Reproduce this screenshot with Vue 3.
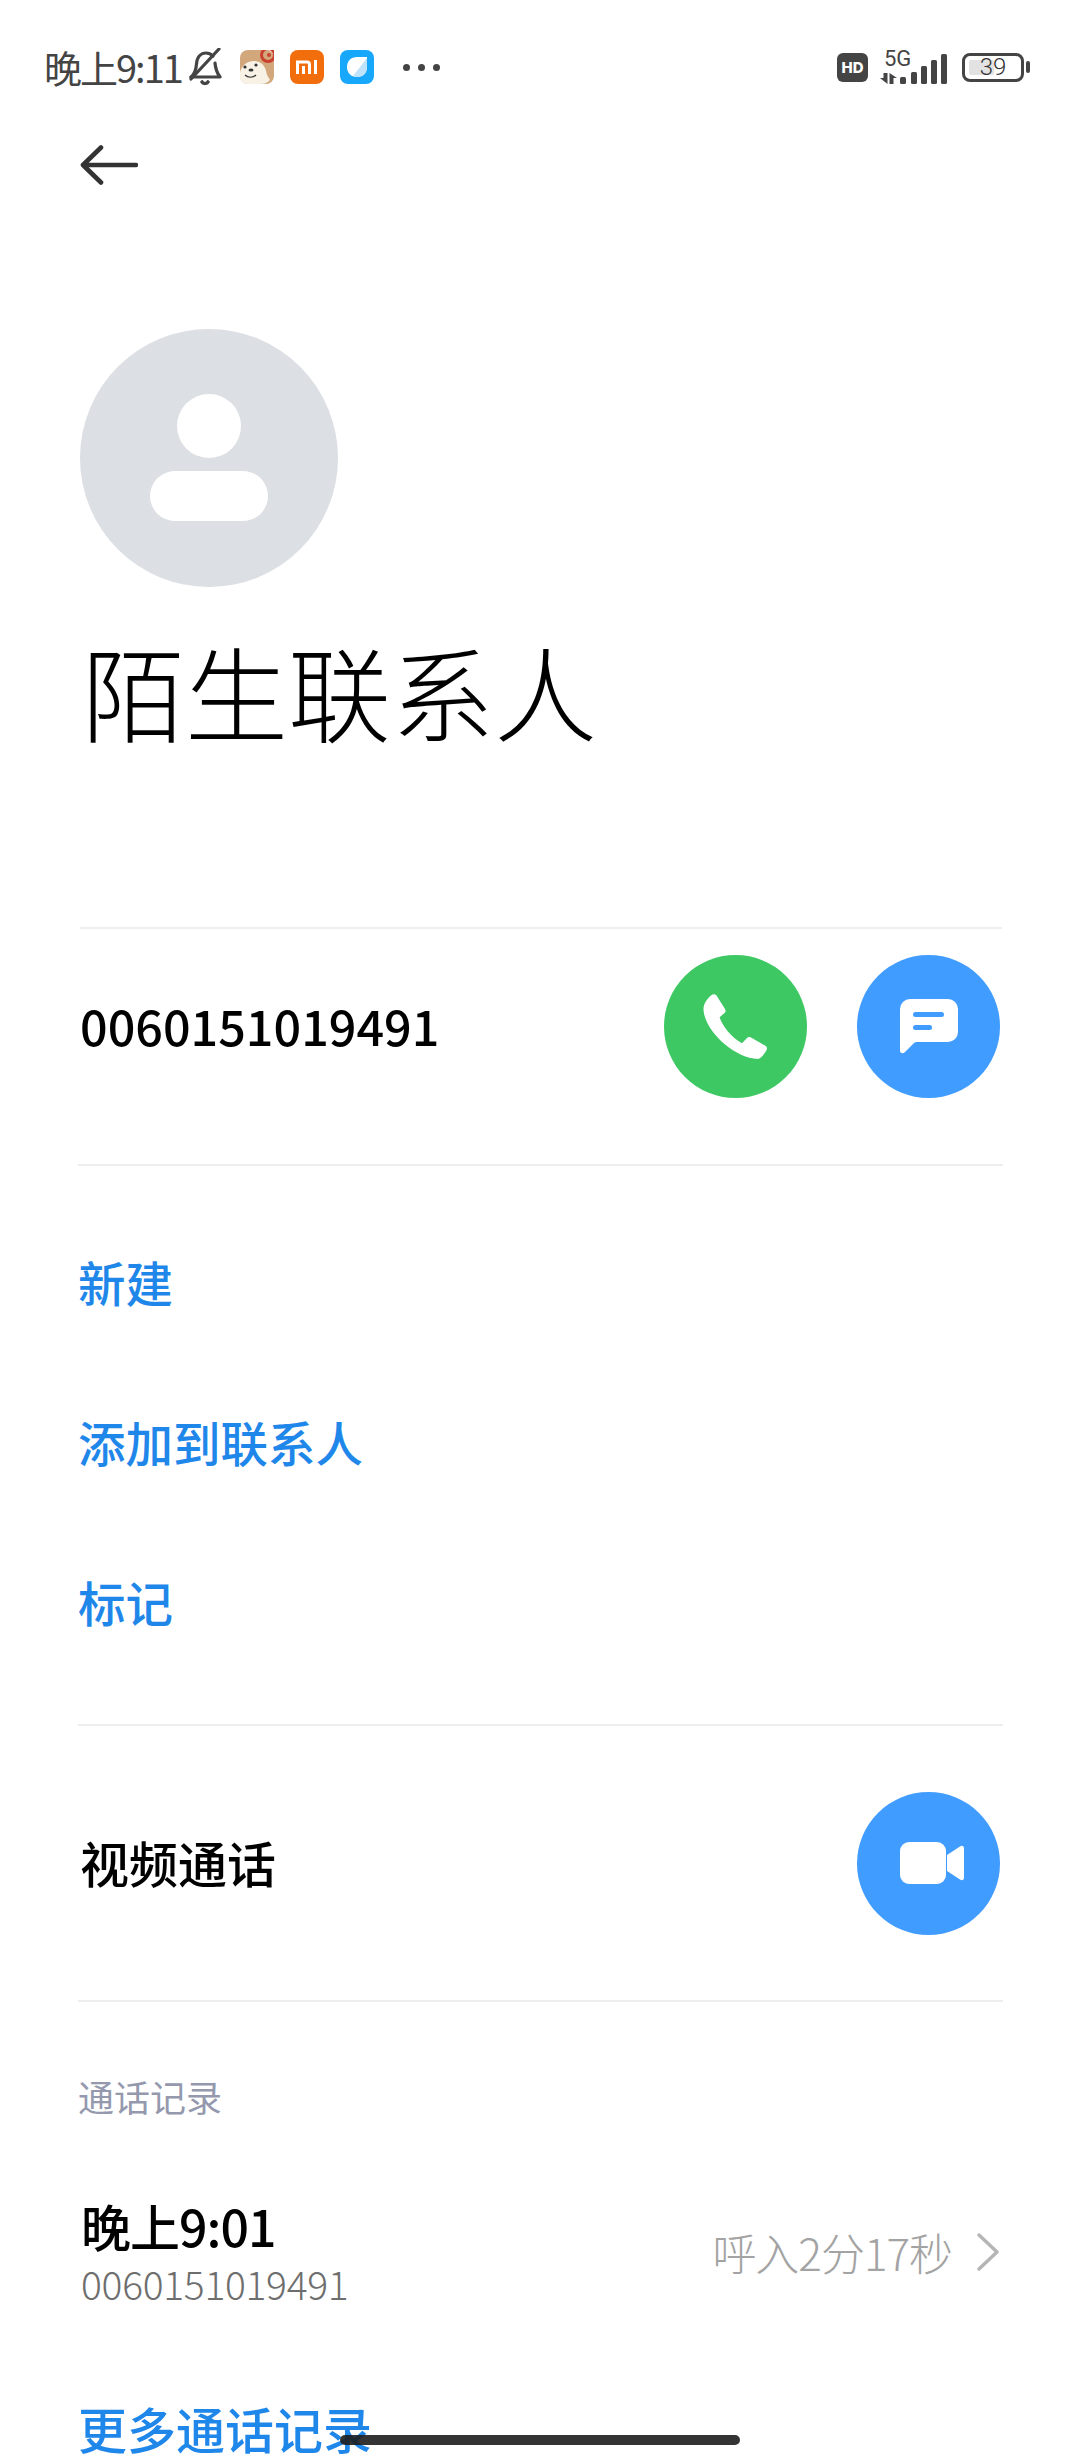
<script setup>
const links = ['新建', '添加到联系人', '标记']
const bars = [
  { x: 20, y: 26, h: 7 }, { x: 31, y: 21, h: 12 }, { x: 41, y: 15, h: 18 }, { x: 51, y: 9, h: 24 }, { x: 61, y: 3, h: 30 }
]
</script>

<template>
  <div class="page">
    <header class="status">
      <div class="status-left">
        <span class="clock">晚上9:11</span>
        <svg class="bell" width="34" height="38" viewBox="0 0 34 38" fill="none" stroke="#444" stroke-width="3.2" stroke-linecap="round" stroke-linejoin="round">
          <path d="M3 29c4-3 5-7 5.500-13C9 9 13 5 18 5c3 0 5 1 7 3" />
          <path d="M27 15c.5 6 2 10 5 14H3" />
          <path d="M31 1 3 31" />
          <path d="M14 34c1 2 5 2 6 0" stroke-width="3.600" />
        </svg>
        <svg class="app" width="34" height="34" viewBox="0 0 34 34">
          <rect width="34" height="34" rx="8" fill="#d3a77c" />
          <path d="M0 22c3-10 12-13 19-10 5 2 7 7 8 13l3 5c-3 3-6 4-9 4H7c-4 0-7-3-7-7z" fill="#f7f1e6" />
          <circle cx="28" cy="5" r="6.500" fill="none" stroke="#c9402f" stroke-width="3" />
          <circle cx="29" cy="5" r="2" fill="#c9402f" />
          <circle cx="5" cy="17" r="1.600" fill="#333" />
          <circle cx="16" cy="15" r="1.600" fill="#333" />
          <ellipse cx="11" cy="20" rx="2.500" ry="1.500" fill="#333" />
          <path d="M5 25c3 3 8 3 11 0" fill="none" stroke="#333" stroke-width="1.200" />
        </svg>
        <span class="mi-icon"><svg width="22" height="14" viewBox="0 0 22 14" fill="none" stroke="#fff" stroke-width="3"><path d="M1.500 14V2H11a2.500 2.500 0 0 1 2.500 2.500V14M7.500 6v8M19.500 0v14" /></svg></span>
        <svg class="app" width="34" height="34" viewBox="0 0 34 34">
          <rect width="34" height="34" rx="8" fill="#18a8fb" />
          <path d="M7 17c0-6 4-10 10-10h10v10c0 6-4 10-10 10-6 0-10-4-10-10z" fill="#fff" />
          <path d="M27 8v9c0 6-4 10-10 10-2 0-3-.4-4-1z" fill="#bfe3fb" />
        </svg>
        <span class="dots"><i></i><i></i><i></i></span>
      </div>
      <div class="status-right">
        <span class="hd">HD</span>
        <div class="signal">
          <span class="five-g">5G</span>
          <svg width="67" height="33" viewBox="0 0 67 33">
            <path d="M0 27h3.500v-5h4v11zM9.500 22l7.500 5h-3.500v6h-4z" fill="#444" />
            <rect v-for="bar in bars" :key="bar.x" :x="bar.x" :y="bar.y" width="6" :height="bar.h" rx="1.500" fill="#444" />
          </svg>
        </div>
        <div class="battery">
          <span class="battery-frame"><span class="battery-fill"></span><span class="battery-num">39</span></span>
          <span class="battery-cap"></span>
        </div>
      </div>
    </header>

    <div class="back-row">
      <svg width="58" height="40" viewBox="0 0 58 40" fill="none" stroke="#333" stroke-width="4.600" stroke-linecap="round" stroke-linejoin="round">
        <path d="M56 20H3M21 2.500 3 20l18 17.500" />
      </svg>
    </div>

    <section class="hero">
      <div class="avatar">
        <span class="avatar-head"></span>
        <span class="avatar-body"></span>
      </div>
      <h1 class="name">陌生联系人</h1>
    </section>

    <div class="line first-line"></div>
    <section class="number-row">
      <span class="number">0060151019491</span>
      <div class="actions">
        <span class="circle green">
          <svg width="65" height="66" viewBox="0 0 65 66">
            <path d="M8 1.500C10-.3 12 0 13.500 1.500L22 15c1 2 .8 3-.5 4l-4.900 4.300C20 33 28 43 39 49.300l5-5.300c1-1.200 2.500-1.200 4-.5l14 8c2.500 1.500 2.500 3.500 1 5.500-2 3-4 7-8 8C30 64 0 35 .5 14 1 9 5 4 8 1.500z" fill="#fff" />
          </svg>
        </span>
        <span class="circle blue">
          <svg width="58" height="55" viewBox="0 0 58 55">
            <path d="M10 0h38a10 10 0 0 1 10 10v23a10 10 0 0 1-10 10H17c-1.500 0-2.500.5-3.500 1.500L5 53c-2 2-5 1.500-5-1.500V10A10 10 0 0 1 10 0z" fill="#fff" />
            <rect x="13" y="13" width="31" height="5" rx="2.500" fill="#409cff" />
            <rect x="13" y="26" width="19" height="5" rx="2.500" fill="#409cff" />
          </svg>
        </span>
      </div>
    </section>
    <div class="line wide"></div>

    <nav class="links">
      <a v-for="link in links" :key="link" class="link">{{ link }}</a>
    </nav>
    <div class="line wide"></div>

    <section class="video-row">
      <span class="video-label">视频通话</span>
      <span class="circle blue">
        <svg class="video-icon" width="64" height="42" viewBox="0 0 64 42">
          <rect width="46" height="42" rx="9" fill="#fff" />
          <path d="M47 13l13-8.500c2-1.500 4-.5 4 2v29c0 2.500-2 3.500-4 2L47 29z" fill="#fff" />
        </svg>
      </span>
    </section>
    <div class="line wide"></div>

    <section class="history">
      <h2 class="history-title">通话记录</h2>
      <div class="history-row">
        <div class="history-main">
          <div class="history-time">晚上9:01</div>
          <div class="history-number">0060151019491</div>
        </div>
        <div class="history-meta">
          <span>呼入2分17秒</span>
          <svg width="24" height="38" viewBox="0 0 24 38" fill="none" stroke="#b5b5b5" stroke-width="3.400" stroke-linecap="round" stroke-linejoin="round">
            <path d="M3 2l18 17L3 36" />
          </svg>
        </div>
      </div>
      <a class="link more">更多通话记录</a>
    </section>

    <div class="home-bar"></div>
  </div>
</template>

<style>
html, body { margin: 0; background: #fff; }
</style>

<style scoped>
.page {
  position: relative;
  width: 1080px;
  height: 2460px;
  overflow: hidden;
  background: #fff;
  font-family: "Noto Sans CJK SC", "Noto Sans", sans-serif;
  color: #000;
}
.status {
  height: 90px;
  padding: 48px 50px 0 44px;
  box-sizing: border-box;
  display: flex;
  justify-content: space-between;
  align-items: flex-start;
}
.status-left { display: flex; align-items: center; height: 38px; }
.clock { font-size: 38px; line-height: 38px; color: #444; letter-spacing: -2px; white-space: nowrap; }
.bell { margin-left: 6px; }
.bell + .app { margin-left: 18px; }
.app { flex: none; }
.mi-icon {
  margin: 0 16px;
  width: 34px;
  height: 34px;
  border-radius: 8px;
  background: #f26d0c;
  display: flex;
  align-items: center;
  justify-content: center;
}
.dots { margin-left: 29px; display: flex; gap: 8px; }
.dots i { width: 7px; height: 7px; border-radius: 50%; background: #444; }
.status-right { display: flex; align-items: center; height: 38px; }
.hd {
  width: 31px;
  height: 29px;
  border-radius: 6px;
  background: #444;
  color: #fff;
  font-family: "Inter", sans-serif;
  font-size: 15px;
  font-weight: 800;
  line-height: 29px;
  text-align: center;
}
.signal { position: relative; width: 67px; height: 33px; margin-left: 12px; }
.signal svg { display: block; }
.five-g {
  position: absolute;
  left: 4px;
  top: -3px;
  font-family: "Roboto", sans-serif;
  font-size: 22px;
  line-height: 22px;
  color: #444;
}
.battery { display: flex; align-items: center; margin-left: 15px; }
.battery-frame {
  position: relative;
  width: 62px;
  height: 29px;
  box-sizing: border-box;
  border: 3px solid #444;
  border-radius: 8px;
  display: block;
}
.battery-fill {
  position: absolute;
  left: 4px;
  top: 4px;
  width: 25px;
  height: 15px;
  background: #e2e2e2;
  border-radius: 2px;
}
.battery-num {
  position: absolute;
  inset: 0;
  font-family: "Roboto", sans-serif;
  font-size: 24px;
  font-weight: 300;
  line-height: 23px;
  text-align: center;
  color: #333;
}
.battery-cap { width: 4px; height: 12px; margin-left: 2px; background: #444; border-radius: 2px; }
.back-row { height: 150px; padding: 0 0 0 80px; display: flex; align-items: center; }
.hero { padding: 89px 0 0 80px; }
.avatar {
  position: relative;
  width: 258px;
  height: 258px;
  border-radius: 50%;
  background: #dcdfe3;
}
.avatar-head {
  position: absolute;
  left: 97px;
  top: 65px;
  width: 64px;
  height: 64px;
  border-radius: 50%;
  background: #fff;
}
.avatar-body {
  position: absolute;
  left: 70px;
  top: 142px;
  width: 118px;
  height: 50px;
  border-radius: 25px;
  background: #fff;
}
.name {
  margin: 44px 0 0 2px;
  font-size: 103px;
  line-height: 120px;
  font-weight: 300;
  letter-spacing: 0;
  white-space: nowrap;
}
.line { height: 2px; background: #eeeeee; }
.first-line { margin: 176px 78px 0 80px; }
.wide { margin: 0 0 0 78px; width: 925px; }
.number-row {
  height: 235px;
  padding: 0 80px 40px 80px;
  display: flex;
  justify-content: space-between;
  align-items: center;
  box-sizing: border-box;
}
.number { font-size: 48.500px; font-weight: 500; letter-spacing: 0; margin-bottom: 4px; }
.actions { display: flex; gap: 50px; }
.circle {
  width: 143px;
  height: 143px;
  border-radius: 50%;
  display: flex;
  align-items: center;
  justify-content: center;
  flex: none;
}
.green { background: #3ec863; }
.blue { background: #409cff; }
.video-icon { margin-left: 6px; }
.links {
  height: 558px;
  box-sizing: border-box;
  padding: 36px 0 0 78px;
  display: flex;
  flex-direction: column;
}
.link {
  display: block;
  height: 160px;
  line-height: 160px;
  font-size: 47.500px;
  font-weight: 500;
  color: #1f87ea;
  white-space: nowrap;
}
.video-row {
  height: 274px;
  box-sizing: border-box;
  padding: 0 80px 0 80px;
  display: flex;
  justify-content: space-between;
  align-items: center;
}
.video-label { font-size: 49px; font-weight: 500; margin-bottom: 4px; }
.history { padding: 0 0 0 78px; }
.history-title {
  margin: 0;
  padding-top: 70px;
  font-size: 36px;
  line-height: 48px;
  font-weight: 400;
  color: #9499ae;
}
.history-row {
  display: flex;
  justify-content: space-between;
  align-items: center;
  padding: 74px 80px 0 3px;
}
.history-time { font-size: 50px; line-height: 62px; font-weight: 500; letter-spacing: -1px; }
.history-number { font-size: 39px; line-height: 54px; color: #6e6e6e; font-weight: 300; letter-spacing: -.300px; }
.history-meta { display: flex; align-items: center; gap: 24px; font-size: 44px; color: #a3a3a3; font-weight: 300; white-space: nowrap; letter-spacing: -1px; }
.more { margin-top: 90px; height: 56px; line-height: 56px; font-size: 49px; }
.home-bar {
  position: absolute;
  left: 340px;
  top: 2435px;
  width: 400px;
  height: 10px;
  border-radius: 5px;
  background: rgba(30, 30, 30, .9);
}
</style>
